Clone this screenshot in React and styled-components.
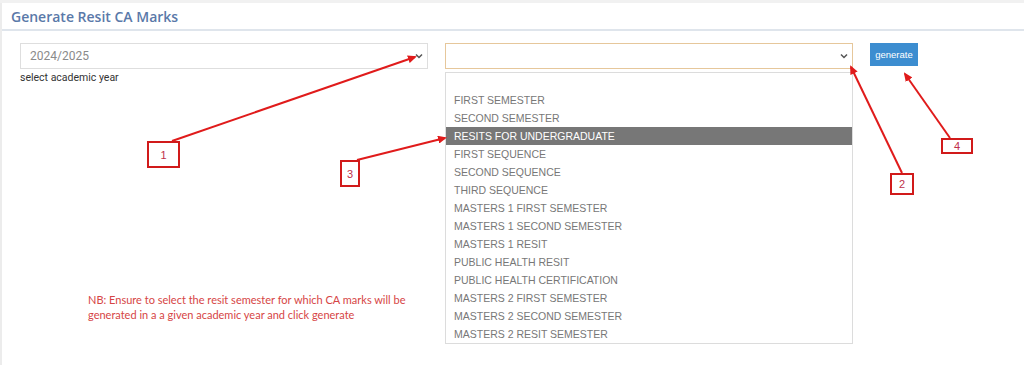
import React from "react";
import styled, { createGlobalStyle } from "styled-components";

const semesters = [
  "",
  "FIRST SEMESTER",
  "SECOND SEMESTER",
  "RESITS FOR UNDERGRADUATE",
  "FIRST SEQUENCE",
  "SECOND SEQUENCE",
  "THIRD SEQUENCE",
  "MASTERS 1 FIRST SEMESTER",
  "MASTERS 1 SECOND SEMESTER",
  "MASTERS 1 RESIT",
  "PUBLIC HEALTH RESIT",
  "PUBLIC HEALTH CERTIFICATION",
  "MASTERS 2 FIRST SEMESTER",
  "MASTERS 2 SECOND SEMESTER",
  "MASTERS 2 RESIT SEMESTER",
];

const callouts = [
  { label: "1", left: 147, top: 141, width: 33, height: 27, from: [172, 141], to: [415, 57] },
  { label: "3", left: 340, top: 160, width: 20, height: 27, from: [357, 160], to: [445, 138] },
  { label: "2", left: 890, top: 173, width: 24, height: 22, from: [902, 173], to: [851, 67] },
  { label: "4", left: 941, top: 138, width: 32, height: 16, from: [950, 138], to: [905, 74] },
];

const Chevron = () => (
  <svg width="8" height="6" viewBox="0 0 8 6">
    <path d="M1 1.5 L4 4.5 L7 1.5" fill="none" stroke="#555" strokeWidth="1.5" />
  </svg>
);

const App = () => {
  return (
    <>
      <GlobalStyle />
      <Page>
        <Panel>
          <Header>
            <Title>Generate Resit CA Marks</Title>
          </Header>
          <Body>
            <FormRow>
              <Field>
                <FakeSelect>
                  <span>2024/2025</span>
                  <Chevron />
                </FakeSelect>
                <Hint>select academic year</Hint>
              </Field>
              <Field>
                <FakeSelect focused>
                  <span />
                  <Chevron />
                </FakeSelect>
                <Menu>
                  {semesters.map((s, i) => (
                    <Option key={i} active={s === "RESITS FOR UNDERGRADUATE"}>
                      {s}
                    </Option>
                  ))}
                </Menu>
              </Field>
              <GenerateButton>generate</GenerateButton>
            </FormRow>
            <Note>
              NB: Ensure to select the resit semester for which CA marks will be
              <br />
              generated in a a given academic year and click generate
            </Note>
          </Body>
        </Panel>

        <Arrows width="1024" height="365">
          <defs>
            <marker id="head" markerWidth="9" markerHeight="8" refX="7" refY="4" orient="auto" markerUnits="userSpaceOnUse">
              <path d="M0 0 L9 4 L0 8 Z" fill="#e01b1b" />
            </marker>
          </defs>
          {callouts.map((c) => (
            <line
              key={c.label}
              x1={c.from[0]}
              y1={c.from[1]}
              x2={c.to[0]}
              y2={c.to[1]}
              stroke="#e01b1b"
              strokeWidth="2"
              markerEnd="url(#head)"
            />
          ))}
        </Arrows>
        {callouts.map((c) => (
          <CalloutBox
            key={c.label}
            style={{ left: c.left, top: c.top, width: c.width, height: c.height }}
          >
            {c.label}
          </CalloutBox>
        ))}
      </Page>
    </>
  );
};

const GlobalStyle = createGlobalStyle`
  body {
    margin: 0;
    background: #fff;
    font-family: Roboto, "Liberation Sans", Arial, sans-serif;
  }
`;

const Page = styled.div`
  position: relative;
  width: 1024px;
  height: 365px;
  overflow: hidden;
  background: #fff;
  border-top: 3px solid #f1f1f1;
  box-sizing: border-box;
`;

const Panel = styled.div`
  height: 100%;
  border-left: 2px solid #ececec;
  box-sizing: border-box;
`;

const Header = styled.div`
  height: 28px;
  padding: 0 9px;
  display: flex;
  align-items: center;
  border-bottom: 2px solid #dfe5ec;
  box-sizing: border-box;
`;

const Title = styled.h1`
  margin: 0;
  font-family: "Open Sans", sans-serif;
  font-size: 14px;
  font-weight: 600;
  color: #5a79a9;
`;

const Body = styled.div`
  padding: 12px 18px 0;
`;

const FormRow = styled.div`
  display: flex;
  align-items: flex-start;
  gap: 17px;
`;

const Field = styled.div`
  position: relative;
  width: 408px;
`;

const FakeSelect = styled.div`
  height: 26px;
  padding: 0 4px 0 9px;
  display: flex;
  align-items: center;
  justify-content: space-between;
  border: 1px solid ${(p) => (p.focused ? "#e6c79b" : "#dedede")};
  box-sizing: border-box;
  font-size: 12px;
  color: #8a8a8a;
  background: #fff;
`;

const Hint = styled.div`
  margin-top: 2px;
  font-size: 10.5px;
  color: #333;
`;

const Menu = styled.div`
  position: absolute;
  top: 29px;
  left: 0;
  width: 408px;
  border: 1px solid #dcdcdc;
  background: #fff;
  box-sizing: border-box;
  z-index: 2;
`;

const Option = styled.div`
  height: 18px;
  line-height: 18px;
  padding: 0 8px;
  font-family: "Liberation Sans", Arial, sans-serif;
  font-size: 10.5px;
  color: ${(p) => (p.active ? "#fff" : "#777")};
  background: ${(p) => (p.active ? "#777" : "transparent")};
`;

const GenerateButton = styled.button`
  width: 48px;
  height: 23px;
  padding: 0;
  border: none;
  background: #3c8dd0;
  color: #fff;
  font-family: "Liberation Sans", Arial, sans-serif;
  font-size: 9.5px;
`;

const Note = styled.p`
  margin: 208px 0 0 68px;
  font-family: Lato, sans-serif;
  font-size: 11px;
  line-height: 15px;
  color: #d64545;
`;

const Arrows = styled.svg`
  position: absolute;
  top: -3px;
  left: 0;
  pointer-events: none;
  z-index: 3;
`;

const CalloutBox = styled.div`
  position: absolute;
  margin-top: -3px;
  display: flex;
  align-items: center;
  justify-content: center;
  border: 2px solid #d11a1a;
  box-sizing: border-box;
  background: #fff;
  font-family: "Liberation Sans", Arial, sans-serif;
  font-size: 11px;
  color: #c0304a;
  z-index: 4;
`;

export default App;
